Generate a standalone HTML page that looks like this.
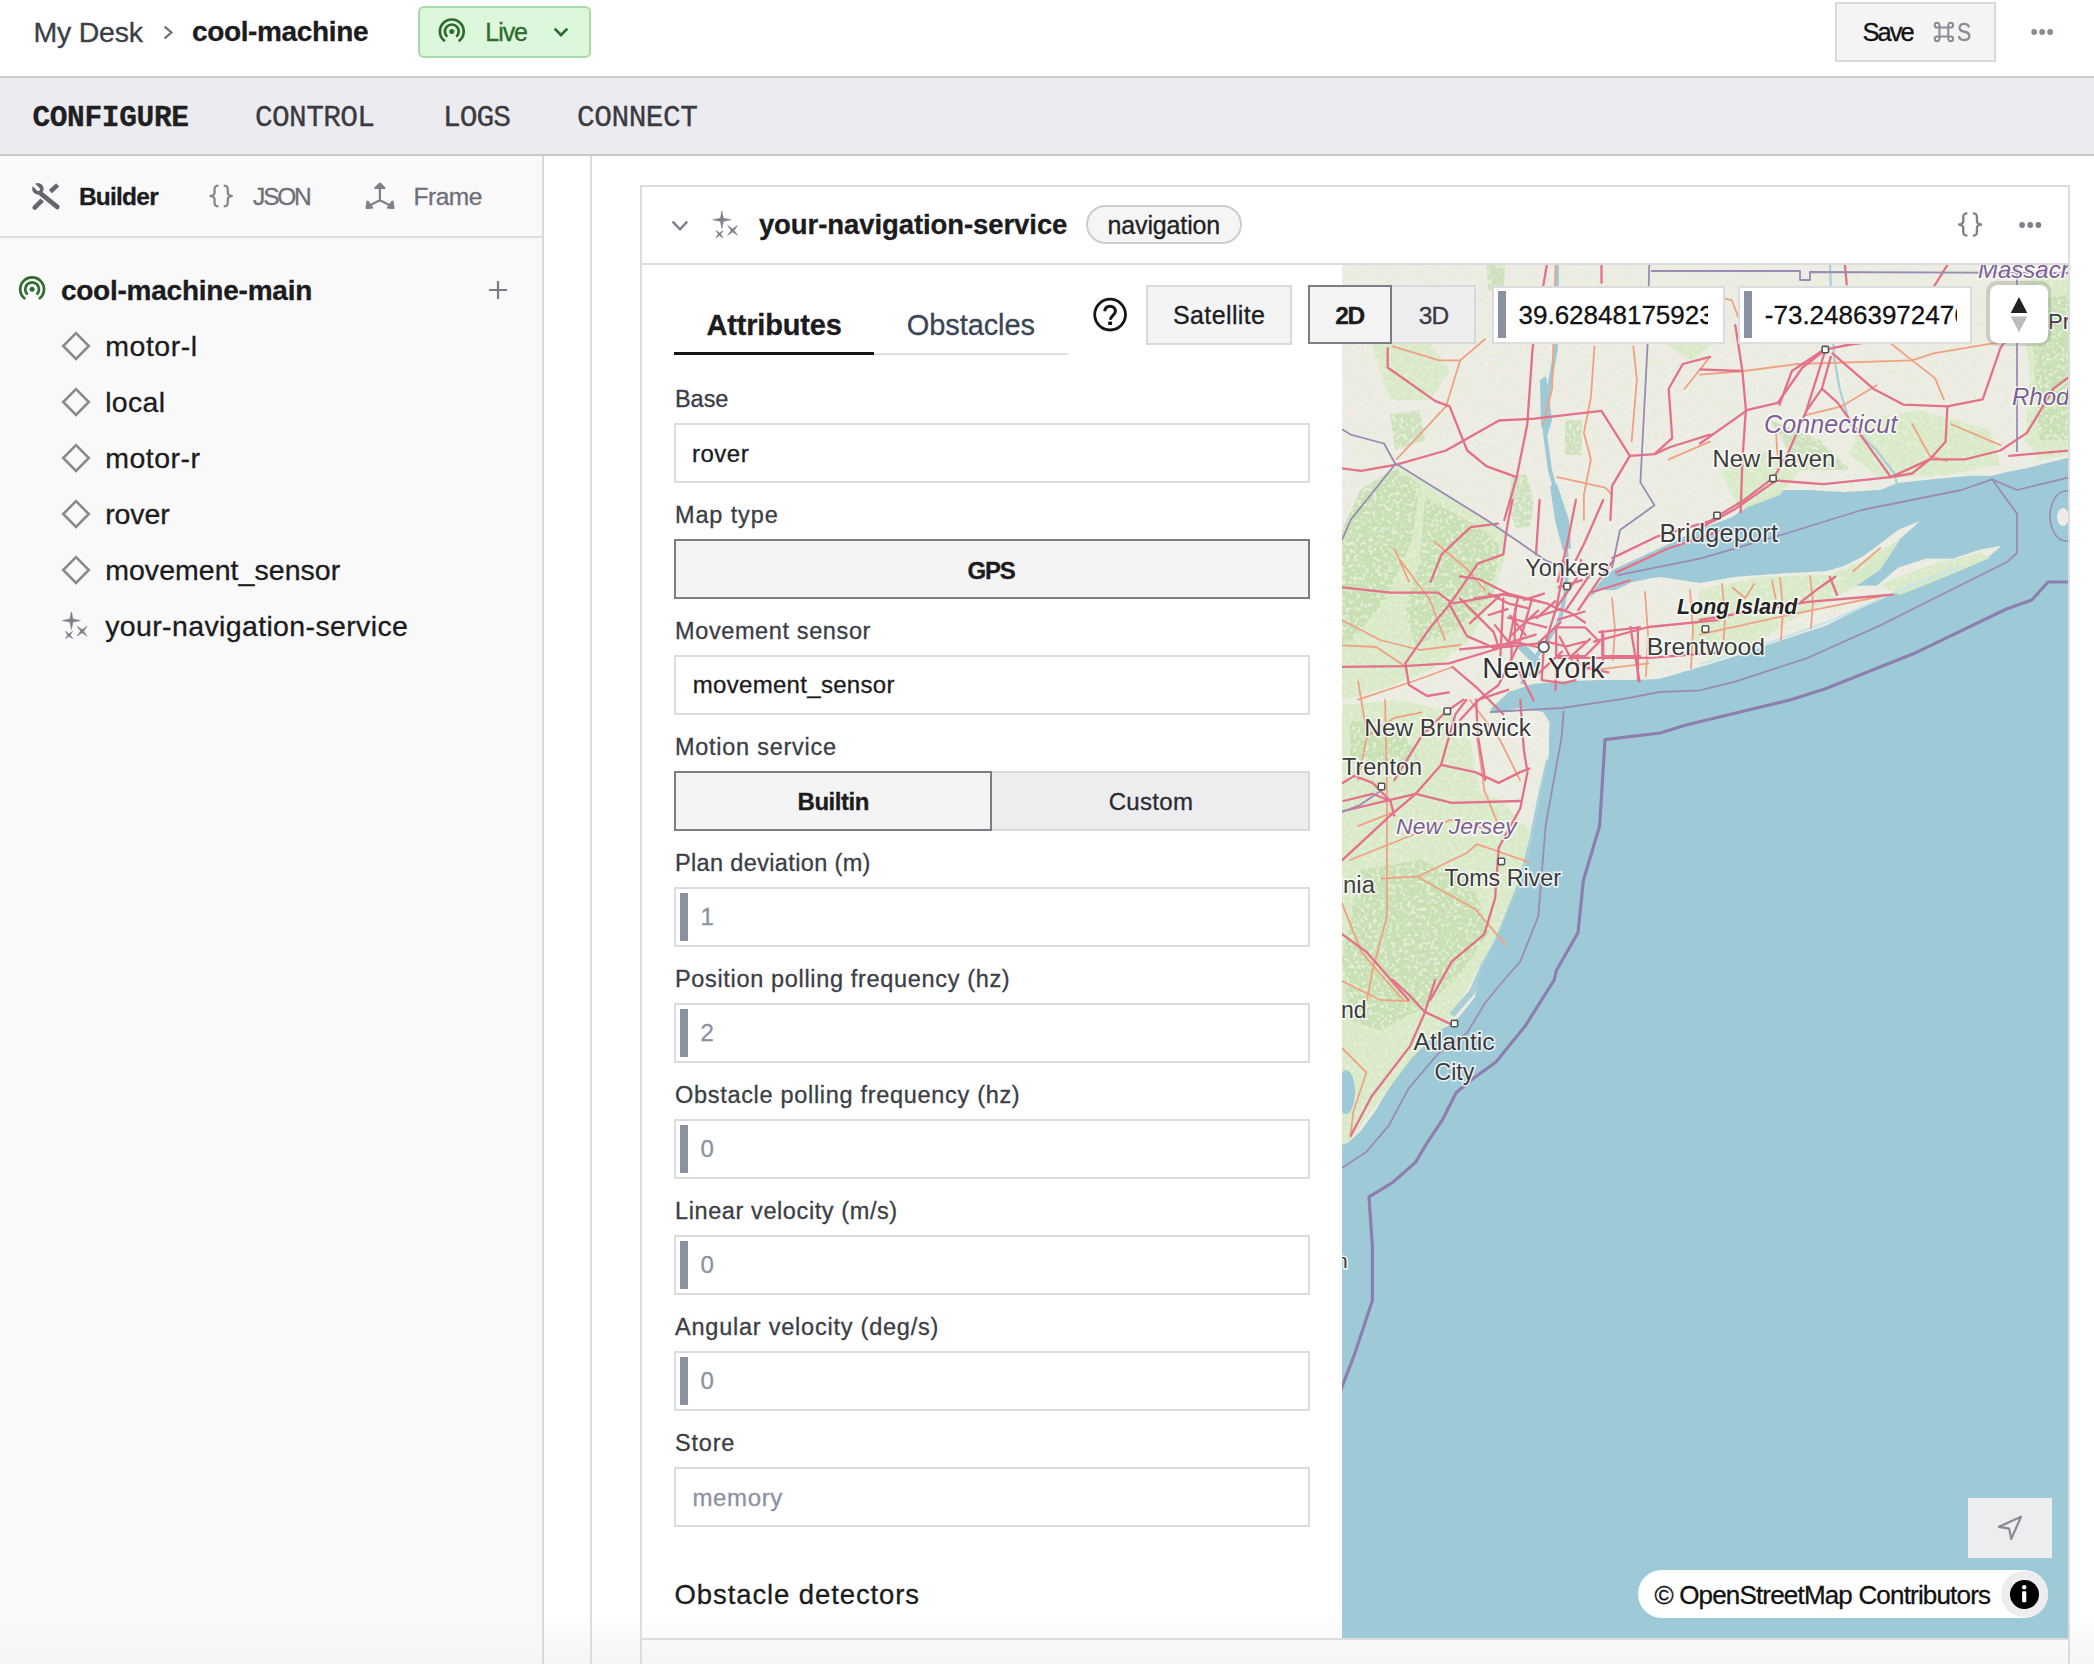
<!DOCTYPE html><html><head><meta charset="utf-8"><title>cool-machine</title><style>
html,body{margin:0;padding:0}
body{width:2094px;height:1664px;overflow:hidden;background:#fff;position:relative;font-family:"Liberation Sans",sans-serif}
.t{position:absolute;white-space:nowrap;line-height:1;-webkit-text-stroke:0.3px currentColor}
.a{position:absolute;box-sizing:border-box}
svg{position:absolute;left:0;top:0;overflow:visible}
</style></head><body>

<div class="a" style="left:0px;top:76px;width:2094px;height:2px;background:#cbcbcd"></div>
<div class="a" style="left:0px;top:78px;width:2094px;height:76px;background:#ecebf0"></div>
<div class="a" style="left:0px;top:154px;width:2094px;height:2px;background:#c9c9cb"></div>
<div class="a" style="left:0px;top:156px;width:542px;height:1508px;background:#f9f9fa"></div>
<div class="a" style="left:640px;top:185px;width:1430px;height:1479px;background:#fff"></div>
<div class="a" style="left:0px;top:1612px;width:2094px;height:52px;background:linear-gradient(rgba(248,248,249,0),rgba(245,245,246,0.95))"></div>
<div class="a" style="left:542px;top:156px;width:2px;height:1508px;background:#d9d9dd"></div>
<div class="a" style="left:0px;top:236px;width:542px;height:2px;background:#dedee2"></div>
<div class="a" style="left:590px;top:156px;width:2px;height:1508px;background:#dcdce0"></div>
<div class="a" style="left:640px;top:185px;width:1430px;height:1479px;border:2px solid #dcdce0;border-bottom:none"></div>
<div class="a" style="left:642px;top:263px;width:1426px;height:2px;background:#dcdce0"></div>
<div class="a" style="left:642px;top:1638px;width:1426px;height:2px;background:#dcdce0"></div>
<div class="a" style="left:1342px;top:265px;width:726px;height:1373px;overflow:hidden;background:#9ecad8">
<svg width="726" height="1373" viewBox="1342 265 726 1373" style="left:0;top:0">
<defs><filter id="blur1" x="-5%" y="-5%" width="110%" height="110%"><feGaussianBlur stdDeviation="0.6"/></filter></defs>
<polygon points="1330.0,255.0 2080.0,255.0 2080.0,457.0 2068.0,457.7 2024.6,468.5 2006.5,472.0 1992.0,475.7 1970.5,475.7 1934.0,479.0 1898.0,483.0 1880.0,490.0 1844.0,492.0 1808.0,490.0 1777.5,490.0 1754.0,503.0 1730.0,518.0 1700.0,529.0 1660.0,548.0 1631.7,561.0 1614.5,569.0 1605.0,576.0 1592.0,592.0 1584.0,610.0 1589.4,598.0 1598.6,590.0 1615.8,590.0 1631.7,582.3 1651.5,578.3 1660.0,577.0 1700.0,583.0 1736.0,576.7 1790.0,573.0 1826.0,571.3 1844.0,566.0 1862.0,557.0 1880.0,544.0 1898.0,530.0 1920.0,521.0 1898.0,540.6 1880.0,558.7 1853.0,573.0 1840.6,585.7 1876.7,585.7 1898.0,567.7 1925.4,558.7 1952.4,558.7 1979.5,549.7 2001.0,546.0 1988.5,557.0 1952.4,569.5 1916.4,584.0 1880.3,598.3 1826.0,625.4 1772.0,643.4 1736.0,656.0 1700.0,667.0 1660.0,678.8 1638.3,680.0 1598.6,680.0 1559.0,681.5 1532.5,684.0 1508.7,692.0 1490.2,709.2 1495.5,713.2 1519.3,708.0 1543.0,711.9 1549.7,722.4 1549.0,736.0 1549.0,754.0 1542.0,790.0 1534.7,826.0 1527.5,862.3 1513.0,894.7 1502.3,925.4 1495.0,943.4 1480.6,970.5 1474.8,997.2 1459.0,1017.0 1449.7,1025.0 1426.0,1036.8 1414.0,1054.0 1399.5,1072.5 1386.3,1092.4 1374.4,1112.2 1359.8,1132.0 1348.0,1142.6 1330.0,1148.0" fill="#efece6"/>
<ellipse cx="2063" cy="517" rx="6" ry="9" fill="#efece6"/>
<polygon points="1395.0,465.0 1440.0,492.0 1487.0,520.0 1508.0,534.0 1504.0,560.0 1492.0,600.0 1470.0,640.0 1430.0,670.0 1380.0,690.0 1342.0,700.0 1342.0,531.0 1357.0,504.0" fill="#d8e9c6" opacity="0.95"/>
<polygon points="1342.0,705.0 1400.0,700.0 1450.0,712.0 1470.0,740.0 1480.0,790.0 1500.0,800.0 1530.0,830.0 1522.0,880.0 1500.0,930.0 1475.0,975.0 1450.0,1020.0 1412.0,1058.0 1380.0,1100.0 1350.0,1140.0 1342.0,1145.0" fill="#d8e9c6" opacity="0.95"/>
<polygon points="1700.0,590.0 1760.0,577.0 1830.0,575.0 1860.0,562.0 1880.0,550.0 1900.0,540.0 1880.0,570.0 1850.0,590.0 1800.0,615.0 1760.0,640.0 1710.0,660.0 1690.0,650.0" fill="#d8e9c6" opacity="0.95"/>
<polygon points="1880.0,585.0 1930.0,565.0 1980.0,553.0 1990.0,558.0 1950.0,575.0 1900.0,595.0" fill="#d8e9c6" opacity="0.95"/>
<polygon points="2020.0,280.0 2068.0,275.0 2068.0,455.0 2040.0,460.0 2025.0,440.0 2030.0,380.0" fill="#d8e9c6" opacity="0.95"/>
<polygon points="1860.0,420.0 1920.0,410.0 1990.0,430.0 2000.0,465.0 1940.0,476.0 1880.0,478.0 1850.0,455.0" fill="#d8e9c6" opacity="0.95"/>
<polygon points="1660.0,290.0 1700.0,300.0 1720.0,340.0 1690.0,360.0 1660.0,340.0" fill="#d8e9c6" opacity="0.95"/>
<polygon points="1370.0,340.0 1420.0,330.0 1450.0,370.0 1430.0,400.0 1390.0,400.0" fill="#d8e9c6" opacity="0.95"/>
<polygon points="1720.0,470.0 1760.0,450.0 1800.0,470.0 1780.0,495.0 1740.0,510.0" fill="#d8e9c6" opacity="0.95"/>
<polygon points="1360.0,490.0 1394.0,468.0 1420.0,485.0 1412.0,540.0 1385.0,600.0 1352.0,640.0 1342.0,645.0 1342.0,531.0" fill="#c0dcab" opacity="0.7"/>
<polygon points="1425.0,497.0 1480.0,528.0 1500.0,545.0 1492.0,595.0 1455.0,630.0 1415.0,645.0 1405.0,610.0 1420.0,560.0" fill="#c0dcab" opacity="0.7"/>
<polygon points="1390.0,414.0 1420.0,410.0 1425.0,440.0 1395.0,450.0" fill="#c0dcab" opacity="0.7"/>
<polygon points="1512.0,476.0 1526.0,474.0 1534.0,500.0 1530.0,526.0 1516.0,528.0 1508.0,505.0" fill="#c0dcab" opacity="0.7"/>
<polygon points="1565.0,420.0 1582.0,420.0 1582.0,455.0 1565.0,455.0" fill="#c0dcab" opacity="0.7"/>
<polygon points="1487.0,265.0 1505.0,265.0 1504.0,290.0 1488.0,290.0" fill="#c0dcab" opacity="0.7"/>
<polygon points="1360.0,870.0 1420.0,860.0 1470.0,880.0 1490.0,930.0 1460.0,975.0 1420.0,1010.0 1380.0,1030.0 1350.0,1020.0 1342.0,960.0" fill="#c0dcab" opacity="0.7"/>
<polygon points="1350.0,720.0 1400.0,730.0 1420.0,760.0 1380.0,770.0 1350.0,760.0" fill="#c0dcab" opacity="0.7"/>
<polygon points="1770.0,420.0 1820.0,440.0 1850.0,470.0 1800.0,470.0" fill="#c0dcab" opacity="0.7"/>
<polygon points="2030.0,300.0 2068.0,295.0 2068.0,440.0 2040.0,440.0" fill="#c0dcab" opacity="0.7"/>
<defs><clipPath id="landclip"><polygon points="1330.0,255.0 2080.0,255.0 2080.0,457.0 2068.0,457.7 2024.6,468.5 2006.5,472.0 1992.0,475.7 1970.5,475.7 1934.0,479.0 1898.0,483.0 1880.0,490.0 1844.0,492.0 1808.0,490.0 1777.5,490.0 1754.0,503.0 1730.0,518.0 1700.0,529.0 1660.0,548.0 1631.7,561.0 1614.5,569.0 1605.0,576.0 1592.0,592.0 1584.0,610.0 1589.4,598.0 1598.6,590.0 1615.8,590.0 1631.7,582.3 1651.5,578.3 1660.0,577.0 1700.0,583.0 1736.0,576.7 1790.0,573.0 1826.0,571.3 1844.0,566.0 1862.0,557.0 1880.0,544.0 1898.0,530.0 1920.0,521.0 1898.0,540.6 1880.0,558.7 1853.0,573.0 1840.6,585.7 1876.7,585.7 1898.0,567.7 1925.4,558.7 1952.4,558.7 1979.5,549.7 2001.0,546.0 1988.5,557.0 1952.4,569.5 1916.4,584.0 1880.3,598.3 1826.0,625.4 1772.0,643.4 1736.0,656.0 1700.0,667.0 1660.0,678.8 1638.3,680.0 1598.6,680.0 1559.0,681.5 1532.5,684.0 1508.7,692.0 1490.2,709.2 1495.5,713.2 1519.3,708.0 1543.0,711.9 1549.7,722.4 1549.0,736.0 1549.0,754.0 1542.0,790.0 1534.7,826.0 1527.5,862.3 1513.0,894.7 1502.3,925.4 1495.0,943.4 1480.6,970.5 1474.8,997.2 1459.0,1017.0 1449.7,1025.0 1426.0,1036.8 1414.0,1054.0 1399.5,1072.5 1386.3,1092.4 1374.4,1112.2 1359.8,1132.0 1348.0,1142.6 1330.0,1148.0"/></clipPath><filter id="spk" x="1342" y="265" width="726" height="1373" filterUnits="userSpaceOnUse"><feTurbulence type="fractalNoise" baseFrequency="0.26" numOctaves="2" seed="7"/><feColorMatrix type="matrix" values="0 0 0 0 0.76  0 0 0 0 0.87  0 0 0 0 0.68  9 0 0 0 -4.75"/></filter></defs>
<g clip-path="url(#landclip)"><rect x="1342" y="265" width="726" height="1373" fill="#fff" filter="url(#spk)" opacity="0.9"/></g>
<ellipse cx="1346" cy="1092" rx="9" ry="22" fill="#9ecad8"/>
<polyline points="1557.0,265.0 1556.0,348.0 1547.0,400.0 1545.0,434.0 1550.0,470.0 1558.0,500.0 1565.0,540.0 1567.0,560.0 1566.0,590.0 1560.0,620.0 1548.0,640.0 1539.0,652.4 1530.0,666.0 1522.0,684.0" fill="none" stroke="#9ecad8" stroke-width="4"/>
<polygon points="1550.0,486.0 1557.0,484.0 1569.0,520.0 1571.0,548.0 1563.0,551.0 1555.0,520.0" fill="#9ecad8"/>
<polygon points="1540.0,380.0 1546.0,376.0 1552.0,420.0 1546.0,440.0 1541.0,425.0" fill="#9ecad8"/>
<polyline points="1830.0,265.0 1832.0,320.0 1834.0,357.0 1839.6,388.7 1850.0,424.0 1876.7,450.5 1894.4,473.5 1897.0,485.0" fill="none" stroke="#aacfdc" stroke-width="2.2"/>
<polyline points="1520.0,645.0 1535.0,660.0 1528.0,675.0" fill="none" stroke="#9ecad8" stroke-width="8"/>
<polyline points="1549.0,760.0 1540.0,800.0 1532.0,840.0 1522.0,880.0 1508.0,915.0 1498.0,940.0 1484.0,965.0 1472.0,992.0 1452.0,1015.0" fill="none" stroke="#9ecad8" stroke-width="6" opacity="0.85"/>
<polyline points="1700.0,664.0 1760.0,646.0 1830.0,621.0 1900.0,590.0 1960.0,566.0" fill="none" stroke="#c9e3ea" stroke-width="2"/>
<polyline points="1700.0,374.6 1744.2,371.0 1797.2,364.0 1912.1,360.4 1933.3,353.4 2018.1,339.2" fill="none" stroke="#efa183" stroke-width="1.8" stroke-linejoin="round" stroke-linecap="round"/>
<polyline points="1876.7,385.2 1841.4,406.4 1806.0,415.2" fill="none" stroke="#efa183" stroke-width="1.8" stroke-linejoin="round" stroke-linecap="round"/>
<polyline points="1912.1,360.4 1935.0,378.1 1943.9,399.3" fill="none" stroke="#efa183" stroke-width="1.8" stroke-linejoin="round" stroke-linecap="round"/>
<polyline points="1950.9,424.0 2000.4,445.2" fill="none" stroke="#efa183" stroke-width="1.8" stroke-linejoin="round" stroke-linecap="round"/>
<polyline points="1885.5,339.2 1912.1,360.4" fill="none" stroke="#efa183" stroke-width="1.8" stroke-linejoin="round" stroke-linecap="round"/>
<polyline points="1912.1,424.0 1929.7,455.8 1947.4,461.1" fill="none" stroke="#efa183" stroke-width="1.8" stroke-linejoin="round" stroke-linecap="round"/>
<polyline points="1776.0,432.9 1777.8,459.4" fill="none" stroke="#efa183" stroke-width="1.8" stroke-linejoin="round" stroke-linecap="round"/>
<polyline points="1700.0,291.5 1731.8,300.3 1740.6,323.3" fill="none" stroke="#efa183" stroke-width="1.8" stroke-linejoin="round" stroke-linecap="round"/>
<polyline points="1393.0,346.3 1439.0,360.4 1460.2,360.4 1484.9,339.2" fill="none" stroke="#efa183" stroke-width="1.8" stroke-linejoin="round" stroke-linecap="round"/>
<polyline points="1460.2,360.4 1446.0,406.4 1396.5,459.4" fill="none" stroke="#efa183" stroke-width="1.8" stroke-linejoin="round" stroke-linecap="round"/>
<polyline points="1555.6,265.0 1552.1,388.7 1543.2,424.0" fill="none" stroke="#efa183" stroke-width="1.8" stroke-linejoin="round" stroke-linecap="round"/>
<polyline points="1594.5,346.3 1590.9,397.5 1583.9,432.9 1590.9,459.4 1583.9,494.7 1583.9,520.0" fill="none" stroke="#efa183" stroke-width="1.8" stroke-linejoin="round" stroke-linecap="round"/>
<polyline points="1633.3,346.3 1636.9,379.9 1631.6,441.7" fill="none" stroke="#efa183" stroke-width="1.8" stroke-linejoin="round" stroke-linecap="round"/>
<polyline points="1557.4,477.1 1605.1,487.7 1612.1,494.7" fill="none" stroke="#efa183" stroke-width="1.8" stroke-linejoin="round" stroke-linecap="round"/>
<polyline points="1668.7,459.4 1710.0,441.7" fill="none" stroke="#efa183" stroke-width="1.8" stroke-linejoin="round" stroke-linecap="round"/>
<polyline points="1684.6,388.7 1710.0,356.9" fill="none" stroke="#efa183" stroke-width="1.8" stroke-linejoin="round" stroke-linecap="round"/>
<polyline points="1394.4,549.0 1409.0,581.7" fill="none" stroke="#efa183" stroke-width="1.8" stroke-linejoin="round" stroke-linecap="round"/>
<polyline points="1434.4,541.7 1467.0,569.0 1485.2,590.7" fill="none" stroke="#efa183" stroke-width="1.8" stroke-linejoin="round" stroke-linecap="round"/>
<polyline points="1340.0,645.2 1376.3,647.0 1403.5,665.2" fill="none" stroke="#efa183" stroke-width="1.8" stroke-linejoin="round" stroke-linecap="round"/>
<polyline points="1358.1,699.6 1412.6,681.5 1452.5,667.0" fill="none" stroke="#efa183" stroke-width="1.8" stroke-linejoin="round" stroke-linecap="round"/>
<polyline points="1367.2,735.9 1394.4,717.8 1421.7,712.3" fill="none" stroke="#efa183" stroke-width="1.8" stroke-linejoin="round" stroke-linecap="round"/>
<polyline points="1358.1,681.5 1367.2,735.9 1358.1,780.0" fill="none" stroke="#efa183" stroke-width="1.8" stroke-linejoin="round" stroke-linecap="round"/>
<polyline points="1575.9,663.3 1603.2,668.8 1648.5,663.3" fill="none" stroke="#efa183" stroke-width="1.8" stroke-linejoin="round" stroke-linecap="round"/>
<polyline points="1381.5,878.5 1417.5,876.7 1466.2,853.3 1477.0,844.2 1529.3,862.3" fill="none" stroke="#efa183" stroke-width="1.8" stroke-linejoin="round" stroke-linecap="round"/>
<polyline points="1417.5,876.7 1475.2,909.2 1505.9,945.2" fill="none" stroke="#efa183" stroke-width="1.8" stroke-linejoin="round" stroke-linecap="round"/>
<polyline points="1385.1,700.0 1386.9,790.2 1386.9,916.4 1372.5,970.5 1367.0,1000.0" fill="none" stroke="#efa183" stroke-width="1.8" stroke-linejoin="round" stroke-linecap="round"/>
<polyline points="1340.0,898.3 1361.6,952.4 1403.1,1000.0" fill="none" stroke="#efa183" stroke-width="1.8" stroke-linejoin="round" stroke-linecap="round"/>
<polyline points="1477.0,736.1 1484.2,790.2 1498.7,826.2" fill="none" stroke="#efa183" stroke-width="1.8" stroke-linejoin="round" stroke-linecap="round"/>
<polyline points="1358.0,826.2 1394.1,811.8" fill="none" stroke="#efa183" stroke-width="1.8" stroke-linejoin="round" stroke-linecap="round"/>
<polyline points="1340.0,980.0 1379.7,999.8 1408.7,1001.2" fill="none" stroke="#efa183" stroke-width="1.8" stroke-linejoin="round" stroke-linecap="round"/>
<polyline points="1340.0,1046.1 1366.4,1072.5 1353.2,1112.2 1350.6,1136.0" fill="none" stroke="#efa183" stroke-width="1.8" stroke-linejoin="round" stroke-linecap="round"/>
<polyline points="1700.0,634.4 1790.2,614.6 1880.3,596.5" fill="none" stroke="#efa183" stroke-width="1.8" stroke-linejoin="round" stroke-linecap="round"/>
<polyline points="1853.3,571.3 1880.3,547.9" fill="none" stroke="#efa183" stroke-width="1.8" stroke-linejoin="round" stroke-linecap="round"/>
<polyline points="1732.5,587.5 1745.1,598.3 1754.1,583.9" fill="none" stroke="#efa183" stroke-width="1.8" stroke-linejoin="round" stroke-linecap="round"/>
<polyline points="1772.1,580.3 1775.7,598.3" fill="none" stroke="#efa183" stroke-width="1.8" stroke-linejoin="round" stroke-linecap="round"/>
<polyline points="1612.0,598.0 1615.0,629.0 1613.0,660.0" fill="none" stroke="#efa183" stroke-width="1.8" stroke-linejoin="round" stroke-linecap="round"/>
<polyline points="1645.0,592.0 1648.0,634.0 1646.0,676.0" fill="none" stroke="#efa183" stroke-width="1.8" stroke-linejoin="round" stroke-linecap="round"/>
<polyline points="1690.0,590.0 1693.0,629.0 1691.0,668.0" fill="none" stroke="#efa183" stroke-width="1.8" stroke-linejoin="round" stroke-linecap="round"/>
<polyline points="1722.0,584.0 1725.0,617.0 1723.0,650.0" fill="none" stroke="#efa183" stroke-width="1.8" stroke-linejoin="round" stroke-linecap="round"/>
<polyline points="1780.0,578.0 1783.0,609.0 1781.0,640.0" fill="none" stroke="#efa183" stroke-width="1.8" stroke-linejoin="round" stroke-linecap="round"/>
<polyline points="1810.0,576.0 1813.0,602.0 1811.0,628.0" fill="none" stroke="#efa183" stroke-width="1.8" stroke-linejoin="round" stroke-linecap="round"/>
<polyline points="1342.0,620.0 1380.0,640.0 1420.0,650.0 1460.0,645.0" fill="none" stroke="#efa183" stroke-width="1.8" stroke-linejoin="round" stroke-linecap="round"/>
<polyline points="1400.0,560.0 1430.0,600.0 1445.0,640.0" fill="none" stroke="#efa183" stroke-width="1.8" stroke-linejoin="round" stroke-linecap="round"/>
<polyline points="1470.0,700.0 1500.0,740.0 1520.0,780.0" fill="none" stroke="#efa183" stroke-width="1.8" stroke-linejoin="round" stroke-linecap="round"/>
<polyline points="1350.0,860.0 1400.0,840.0 1450.0,820.0 1490.0,830.0" fill="none" stroke="#efa183" stroke-width="1.8" stroke-linejoin="round" stroke-linecap="round"/>
<polyline points="1340.0,468.2 1361.2,470.9 1396.5,464.7 1446.0,450.5 1499.0,420.5 1534.4,418.7 1601.5,410.8 1629.8,455.8 1654.5,454.1 1670.4,447.0 1710.0,434.6" fill="none" stroke="#e27189" stroke-width="2.3" stroke-linejoin="round" stroke-linecap="round"/>
<polyline points="1387.7,348.1 1387.7,367.5 1435.4,401.1 1449.6,406.4 1467.2,450.5 1486.7,466.4 1516.7,477.1 1504.3,520.0" fill="none" stroke="#e27189" stroke-width="2.3" stroke-linejoin="round" stroke-linecap="round"/>
<polyline points="1546.8,265.0 1532.6,348.1 1527.3,424.0 1516.7,477.1" fill="none" stroke="#e27189" stroke-width="2.3" stroke-linejoin="round" stroke-linecap="round"/>
<polyline points="1601.5,265.0 1601.5,282.7" fill="none" stroke="#e27189" stroke-width="2.3" stroke-linejoin="round" stroke-linecap="round"/>
<polyline points="1629.8,455.8 1612.1,485.9 1610.4,520.0" fill="none" stroke="#e27189" stroke-width="2.3" stroke-linejoin="round" stroke-linecap="round"/>
<polyline points="1654.5,454.1 1672.2,438.2 1668.7,388.7 1682.8,364.0 1710.0,356.9" fill="none" stroke="#e27189" stroke-width="2.3" stroke-linejoin="round" stroke-linecap="round"/>
<polyline points="1825.5,349.8 1806.0,411.7 1788.4,452.3 1774.2,477.1 1744.2,500.0 1717.7,515.9 1700.0,528.3" fill="none" stroke="#e27189" stroke-width="2.3" stroke-linejoin="round" stroke-linecap="round"/>
<polyline points="1830.8,356.9 1821.9,388.7 1806.0,411.7" fill="none" stroke="#e27189" stroke-width="2.3" stroke-linejoin="round" stroke-linecap="round"/>
<polyline points="1825.5,349.8 1802.5,367.5 1777.8,402.8 1747.7,409.9 1700.0,443.5" fill="none" stroke="#e27189" stroke-width="2.3" stroke-linejoin="round" stroke-linecap="round"/>
<polyline points="1832.5,353.4 1873.2,388.7 1903.2,404.6 1947.4,406.4 1982.7,399.3 2000.4,348.1 2003.9,342.8 2070.0,318.0" fill="none" stroke="#e27189" stroke-width="2.3" stroke-linejoin="round" stroke-linecap="round"/>
<polyline points="1947.4,406.4 1945.6,441.7 1929.7,459.4 1912.1,473.5 1890.8,477.1 1859.0,432.9 1837.8,402.8 1821.9,388.7" fill="none" stroke="#e27189" stroke-width="2.3" stroke-linejoin="round" stroke-linecap="round"/>
<polyline points="1700.0,528.3 1735.3,508.9 1776.0,480.6 1823.7,484.1 1890.8,477.1 1929.7,459.4 1965.1,459.4 2000.4,450.5 2026.9,432.9 2053.4,388.7 2070.0,376.3" fill="none" stroke="#e27189" stroke-width="2.3" stroke-linejoin="round" stroke-linecap="round"/>
<polyline points="1735.3,325.1 1742.4,371.0 1745.9,409.9 1742.4,459.4 1740.6,512.4" fill="none" stroke="#e27189" stroke-width="2.3" stroke-linejoin="round" stroke-linecap="round"/>
<polyline points="1700.0,369.3 1740.6,371.0" fill="none" stroke="#e27189" stroke-width="2.3" stroke-linejoin="round" stroke-linecap="round"/>
<polyline points="1779.5,404.6 1791.9,371.0 1823.7,349.8" fill="none" stroke="#e27189" stroke-width="2.3" stroke-linejoin="round" stroke-linecap="round"/>
<polyline points="1947.4,265.0 1929.7,293.3" fill="none" stroke="#e27189" stroke-width="2.3" stroke-linejoin="round" stroke-linecap="round"/>
<polyline points="1844.9,265.0 1846.7,284.4" fill="none" stroke="#e27189" stroke-width="2.3" stroke-linejoin="round" stroke-linecap="round"/>
<polyline points="2070.0,450.5 2009.2,455.8" fill="none" stroke="#e27189" stroke-width="2.3" stroke-linejoin="round" stroke-linecap="round"/>
<polyline points="1823.7,349.8 1850.2,344.5 1876.7,341.0" fill="none" stroke="#e27189" stroke-width="2.3" stroke-linejoin="round" stroke-linecap="round"/>
<polyline points="1340.0,587.1 1390.8,592.6 1438.0,592.6 1452.5,603.4 1503.3,594.4 1539.6,601.6" fill="none" stroke="#e27189" stroke-width="2.3" stroke-linejoin="round" stroke-linecap="round"/>
<polyline points="1340.0,667.0 1403.5,666.1 1448.9,663.3 1503.3,647.0 1539.6,643.4" fill="none" stroke="#e27189" stroke-width="2.3" stroke-linejoin="round" stroke-linecap="round"/>
<polyline points="1405.3,663.3 1430.7,627.0 1448.9,605.3 1477.9,563.5 1503.3,554.4 1507.0,527.2 1512.4,500.0" fill="none" stroke="#e27189" stroke-width="2.3" stroke-linejoin="round" stroke-linecap="round"/>
<polyline points="1405.3,663.3 1409.0,685.1 1427.1,696.0 1448.9,692.4" fill="none" stroke="#e27189" stroke-width="2.3" stroke-linejoin="round" stroke-linecap="round"/>
<polyline points="1448.9,603.4 1467.0,636.1 1496.1,648.8" fill="none" stroke="#e27189" stroke-width="2.3" stroke-linejoin="round" stroke-linecap="round"/>
<polyline points="1452.5,667.0 1477.9,688.7 1503.3,714.2" fill="none" stroke="#e27189" stroke-width="2.3" stroke-linejoin="round" stroke-linecap="round"/>
<polyline points="1463.4,699.6 1445.3,712.3 1421.7,735.9 1394.4,780.0" fill="none" stroke="#e27189" stroke-width="2.3" stroke-linejoin="round" stroke-linecap="round"/>
<polyline points="1476.1,699.6 1477.9,735.9 1485.2,780.0" fill="none" stroke="#e27189" stroke-width="2.3" stroke-linejoin="round" stroke-linecap="round"/>
<polyline points="1594.1,641.6 1648.5,627.0 1720.0,619.8" fill="none" stroke="#e27189" stroke-width="2.3" stroke-linejoin="round" stroke-linecap="round"/>
<polyline points="1557.8,657.9 1648.5,657.9 1720.0,652.5" fill="none" stroke="#e27189" stroke-width="2.3" stroke-linejoin="round" stroke-linecap="round"/>
<polyline points="1603.2,634.3 1603.2,663.3" fill="none" stroke="#e27189" stroke-width="2.3" stroke-linejoin="round" stroke-linecap="round"/>
<polyline points="1630.4,627.0 1639.5,681.5" fill="none" stroke="#e27189" stroke-width="2.3" stroke-linejoin="round" stroke-linecap="round"/>
<polyline points="1615.9,572.6 1666.7,549.0 1720.0,530.9" fill="none" stroke="#e27189" stroke-width="2.3" stroke-linejoin="round" stroke-linecap="round"/>
<polyline points="1612.2,558.1 1657.6,536.3 1720.0,518.1" fill="none" stroke="#e27189" stroke-width="2.3" stroke-linejoin="round" stroke-linecap="round"/>
<polyline points="1575.9,559.9 1585.0,541.7 1603.2,500.0" fill="none" stroke="#e27189" stroke-width="2.3" stroke-linejoin="round" stroke-linecap="round"/>
<polyline points="1557.8,581.7 1566.9,545.4 1575.9,500.0" fill="none" stroke="#e27189" stroke-width="2.3" stroke-linejoin="round" stroke-linecap="round"/>
<polyline points="1536.0,554.4 1539.6,500.0" fill="none" stroke="#e27189" stroke-width="2.3" stroke-linejoin="round" stroke-linecap="round"/>
<polyline points="1430.7,581.7 1441.6,554.4 1470.7,527.2 1497.9,523.6" fill="none" stroke="#e27189" stroke-width="2.3" stroke-linejoin="round" stroke-linecap="round"/>
<polyline points="1543.7,648.5 1556.2,608.1 1561.9,579.2 1565.8,560.0" fill="none" stroke="#e27189" stroke-width="2.3" stroke-linejoin="round" stroke-linecap="round"/>
<polyline points="1556.2,608.1 1576.3,579.2 1581.2,560.0" fill="none" stroke="#e27189" stroke-width="2.3" stroke-linejoin="round" stroke-linecap="round"/>
<polyline points="1565.8,610.0 1586.9,579.2 1594.6,565.8" fill="none" stroke="#e27189" stroke-width="2.3" stroke-linejoin="round" stroke-linecap="round"/>
<polyline points="1578.3,610.0 1599.4,579.2 1613.8,560.0" fill="none" stroke="#e27189" stroke-width="2.3" stroke-linejoin="round" stroke-linecap="round"/>
<polyline points="1460.0,649.4 1488.8,646.5 1517.7,642.7 1543.7,648.5" fill="none" stroke="#e27189" stroke-width="2.3" stroke-linejoin="round" stroke-linecap="round"/>
<polyline points="1556.2,627.3 1585.0,627.3 1599.4,641.7 1585.0,656.2 1556.2,656.2 1556.2,627.3" fill="none" stroke="#e27189" stroke-width="2.3" stroke-linejoin="round" stroke-linecap="round"/>
<polyline points="1599.4,632.1 1640.0,627.3" fill="none" stroke="#e27189" stroke-width="2.3" stroke-linejoin="round" stroke-linecap="round"/>
<polyline points="1602.3,631.2 1602.3,656.2 1640.0,656.2" fill="none" stroke="#e27189" stroke-width="2.3" stroke-linejoin="round" stroke-linecap="round"/>
<polyline points="1637.9,627.3 1637.9,680.2" fill="none" stroke="#e27189" stroke-width="2.3" stroke-linejoin="round" stroke-linecap="round"/>
<polyline points="1460.0,576.3 1479.2,579.2 1508.1,593.7 1546.5,603.3 1556.2,608.1" fill="none" stroke="#e27189" stroke-width="2.3" stroke-linejoin="round" stroke-linecap="round"/>
<polyline points="1460.0,598.5 1474.4,612.9 1493.7,632.1 1498.5,646.5" fill="none" stroke="#e27189" stroke-width="2.3" stroke-linejoin="round" stroke-linecap="round"/>
<polyline points="1474.4,598.5 1508.1,593.7" fill="none" stroke="#e27189" stroke-width="2.3" stroke-linejoin="round" stroke-linecap="round"/>
<polyline points="1503.3,598.5 1500.4,656.2" fill="none" stroke="#e27189" stroke-width="2.3" stroke-linejoin="round" stroke-linecap="round"/>
<polyline points="1517.7,598.5 1508.1,646.5" fill="none" stroke="#e27189" stroke-width="2.3" stroke-linejoin="round" stroke-linecap="round"/>
<polyline points="1532.1,598.5 1519.6,641.7" fill="none" stroke="#e27189" stroke-width="2.3" stroke-linejoin="round" stroke-linecap="round"/>
<polyline points="1517.7,646.5 1498.5,685.0 1479.2,699.4 1460.0,720.0" fill="none" stroke="#e27189" stroke-width="2.3" stroke-linejoin="round" stroke-linecap="round"/>
<polyline points="1479.2,699.4 1508.1,689.8" fill="none" stroke="#e27189" stroke-width="2.3" stroke-linejoin="round" stroke-linecap="round"/>
<polyline points="1543.7,648.5 1541.7,680.2 1563.8,683.1 1575.4,680.2" fill="none" stroke="#e27189" stroke-width="2.3" stroke-linejoin="round" stroke-linecap="round"/>
<polyline points="1546.5,641.7 1565.8,646.5 1585.0,641.7" fill="none" stroke="#e27189" stroke-width="2.3" stroke-linejoin="round" stroke-linecap="round"/>
<polyline points="1556.2,608.1 1570.6,612.9 1585.0,622.5" fill="none" stroke="#e27189" stroke-width="2.3" stroke-linejoin="round" stroke-linecap="round"/>
<polyline points="1508.1,617.7 1527.3,622.5 1546.5,627.3" fill="none" stroke="#e27189" stroke-width="2.3" stroke-linejoin="round" stroke-linecap="round"/>
<polyline points="1488.8,593.7 1508.1,603.3 1527.3,608.1" fill="none" stroke="#e27189" stroke-width="2.3" stroke-linejoin="round" stroke-linecap="round"/>
<polyline points="1340.0,862.3 1390.5,815.4 1415.7,793.8 1441.0,764.9 1455.4,714.4 1466.2,700.0" fill="none" stroke="#e27189" stroke-width="2.3" stroke-linejoin="round" stroke-linecap="round"/>
<polyline points="1520.3,700.0 1523.9,750.5 1527.5,772.1 1520.3,808.2 1498.7,847.9 1495.1,898.3 1484.2,934.4 1451.8,961.4 1430.2,1000.0" fill="none" stroke="#e27189" stroke-width="2.3" stroke-linejoin="round" stroke-linecap="round"/>
<polyline points="1340.0,811.8 1415.7,793.8 1451.8,802.8 1520.3,801.0" fill="none" stroke="#e27189" stroke-width="2.3" stroke-linejoin="round" stroke-linecap="round"/>
<polyline points="1340.0,932.6 1367.0,952.4 1408.5,1000.0" fill="none" stroke="#e27189" stroke-width="2.3" stroke-linejoin="round" stroke-linecap="round"/>
<polyline points="1441.0,764.9 1475.2,772.1 1498.7,782.9 1520.3,772.1 1529.3,768.5" fill="none" stroke="#e27189" stroke-width="2.3" stroke-linejoin="round" stroke-linecap="round"/>
<polyline points="1340.0,784.7 1354.4,775.7 1372.5,782.9 1390.5,801.0 1394.1,815.4" fill="none" stroke="#e27189" stroke-width="2.3" stroke-linejoin="round" stroke-linecap="round"/>
<polyline points="1343.6,801.0 1372.5,793.8 1390.5,801.0" fill="none" stroke="#e27189" stroke-width="2.3" stroke-linejoin="round" stroke-linecap="round"/>
<polyline points="1435.2,980.0 1424.6,1013.1 1410.1,1046.1 1371.7,1096.3 1350.6,1136.0" fill="none" stroke="#e27189" stroke-width="2.3" stroke-linejoin="round" stroke-linecap="round"/>
<polyline points="1392.9,980.0 1408.7,994.5 1424.6,1011.7 1452.4,1024.9" fill="none" stroke="#e27189" stroke-width="2.3" stroke-linejoin="round" stroke-linecap="round"/>
<polyline points="1700.0,620.0 1808.2,601.9 1871.3,596.5 1892.9,594.7" fill="none" stroke="#e27189" stroke-width="2.3" stroke-linejoin="round" stroke-linecap="round"/>
<polyline points="1801.0,601.9 1817.2,589.3 1835.2,576.7" fill="none" stroke="#e27189" stroke-width="2.3" stroke-linejoin="round" stroke-linecap="round"/>
<polyline points="1829.8,576.7 1837.0,594.7" fill="none" stroke="#e27189" stroke-width="2.3" stroke-linejoin="round" stroke-linecap="round"/>
<polyline points="1558.5,587.4 1582.0,580.1" fill="none" stroke="#e27189" stroke-width="2.3" stroke-linejoin="round" stroke-linecap="round"/>
<polyline points="1501.0,594.7 1470.0,623.2" fill="none" stroke="#e27189" stroke-width="2.3" stroke-linejoin="round" stroke-linecap="round"/>
<polyline points="1495.0,625.1 1507.8,641.2" fill="none" stroke="#e27189" stroke-width="2.3" stroke-linejoin="round" stroke-linecap="round"/>
<polyline points="1511.8,642.2 1511.1,665.6" fill="none" stroke="#e27189" stroke-width="2.3" stroke-linejoin="round" stroke-linecap="round"/>
<polyline points="1559.7,636.8 1573.4,663.6" fill="none" stroke="#e27189" stroke-width="2.3" stroke-linejoin="round" stroke-linecap="round"/>
<polyline points="1517.0,667.6 1533.7,700.4" fill="none" stroke="#e27189" stroke-width="2.3" stroke-linejoin="round" stroke-linecap="round"/>
<polyline points="1524.1,599.8 1544.0,593.6" fill="none" stroke="#e27189" stroke-width="2.3" stroke-linejoin="round" stroke-linecap="round"/>
<polyline points="1528.7,619.1 1561.5,609.0" fill="none" stroke="#e27189" stroke-width="2.3" stroke-linejoin="round" stroke-linecap="round"/>
<polyline points="1577.8,654.3 1577.2,675.7" fill="none" stroke="#e27189" stroke-width="2.3" stroke-linejoin="round" stroke-linecap="round"/>
<polyline points="1591.1,592.5 1629.7,580.5" fill="none" stroke="#e27189" stroke-width="2.3" stroke-linejoin="round" stroke-linecap="round"/>
<polyline points="1556.1,666.9 1555.5,690.0" fill="none" stroke="#e27189" stroke-width="2.3" stroke-linejoin="round" stroke-linecap="round"/>
<polyline points="1493.0,647.8 1535.6,634.6" fill="none" stroke="#e27189" stroke-width="2.3" stroke-linejoin="round" stroke-linecap="round"/>
<polyline points="1583.4,667.3 1608.4,672.4" fill="none" stroke="#e27189" stroke-width="2.3" stroke-linejoin="round" stroke-linecap="round"/>
<polyline points="1558.1,619.7 1584.5,611.5" fill="none" stroke="#e27189" stroke-width="2.3" stroke-linejoin="round" stroke-linecap="round"/>
<polyline points="1562.1,651.7 1535.9,675.6" fill="none" stroke="#e27189" stroke-width="2.3" stroke-linejoin="round" stroke-linecap="round"/>
<polyline points="1555.1,601.3 1536.9,617.9" fill="none" stroke="#e27189" stroke-width="2.3" stroke-linejoin="round" stroke-linecap="round"/>
<polyline points="1538.2,610.6 1511.2,635.4" fill="none" stroke="#e27189" stroke-width="2.3" stroke-linejoin="round" stroke-linecap="round"/>
<polyline points="1510.3,615.8 1525.3,634.8" fill="none" stroke="#e27189" stroke-width="2.3" stroke-linejoin="round" stroke-linecap="round"/>
<polyline points="1488.7,615.0 1507.6,609.1" fill="none" stroke="#e27189" stroke-width="2.3" stroke-linejoin="round" stroke-linecap="round"/>
<polyline points="1590.0,638.9 1570.5,656.8" fill="none" stroke="#e27189" stroke-width="2.3" stroke-linejoin="round" stroke-linecap="round"/>
<polyline points="1560.4,622.6 1538.0,643.1" fill="none" stroke="#e27189" stroke-width="2.3" stroke-linejoin="round" stroke-linecap="round"/>
<polyline points="1515.5,608.4 1514.5,641.0" fill="none" stroke="#e27189" stroke-width="2.3" stroke-linejoin="round" stroke-linecap="round"/>
<polyline points="1342.0,429.3 1350.6,434.6 1384.0,443.5 1394.8,463.0 1486.7,520.0 1545.0,560.0 1590.0,578.0" fill="none" stroke="#9a8bb4" stroke-width="1.8" stroke-linejoin="round"/>
<polyline points="1394.8,464.7 1350.6,520.0 1342.0,540.0" fill="none" stroke="#9a8bb4" stroke-width="1.8" stroke-linejoin="round"/>
<polyline points="1382.0,790.0 1360.0,805.0 1342.0,812.0" fill="none" stroke="#9a8bb4" stroke-width="1.8" stroke-linejoin="round"/>
<polyline points="1649.2,265.0 1647.5,346.3 1640.4,482.4 1654.5,505.3 1620.0,530.0 1612.0,568.0" fill="none" stroke="#9a8bb4" stroke-width="1.8" stroke-linejoin="round"/>
<polyline points="1651.0,271.0 1800.0,271.0 1800.0,280.0 1810.0,280.0 1810.0,272.0 2068.0,273.0" fill="none" stroke="#9a8bb4" stroke-width="1.8" stroke-linejoin="round"/>
<polyline points="2017.0,265.0 2017.0,452.0" fill="none" stroke="#9a8bb4" stroke-width="1.8" stroke-linejoin="round"/>
<polyline points="1617.0,575.4 1700.0,558.7 1781.0,535.0 1862.0,510.0 1961.5,490.0 1992.0,479.3 2017.0,513.6 2017.0,553.0 2006.5,562.3 1952.4,589.3 1880.3,625.4 1808.0,657.8 1736.0,681.3 1700.0,690.3 1660.0,692.0 1625.0,698.6 1561.6,708.0 1490.0,712.0" fill="none" stroke="#9a8bb4" stroke-width="1.8" stroke-linejoin="round"/>
<polyline points="1992.0,479.3 2017.0,490.0 2068.0,477.5" fill="none" stroke="#9a8bb4" stroke-width="1.8" stroke-linejoin="round"/>
<polyline points="1563.6,710.8 1561.8,736.0 1545.6,826.0 1538.3,916.4 1520.3,961.5 1504.0,980.0 1485.4,1002.5 1467.0,1032.9 1437.8,1054.0 1408.7,1088.4 1388.9,1125.4 1366.4,1151.9 1342.0,1167.7" fill="none" stroke="#9a8bb4" stroke-width="1.8" stroke-linejoin="round"/>
<ellipse cx="2066" cy="516" rx="16" ry="25" fill="none" stroke="#9a8bb4" stroke-width="1.6"/>
<polyline points="2070.0,582.0 2048.0,582.0 2031.8,600.0 2006.5,609.0 1916.4,652.4 1826.0,688.5 1790.0,700.0 1686.0,725.0 1660.0,733.0 1605.0,739.7 1599.6,826.0 1583.4,880.3 1578.0,932.6 1556.4,970.5 1554.2,980.0 1525.0,1026.3 1496.0,1062.0 1472.2,1079.2 1456.3,1092.4 1443.0,1118.8 1427.3,1142.6 1415.4,1162.4 1392.9,1182.3 1369.0,1196.8 1372.4,1246.5 1372.4,1300.6 1354.4,1354.7 1340.0,1392.0" fill="none" stroke="#8c7fb0" stroke-width="3.2" stroke-linejoin="round"/>
<rect x="1563.8" y="583.0999999999999" width="6.4" height="6.4" rx="1" fill="#fff" stroke="#555" stroke-width="1.6"/>
<rect x="1769.8" y="475.2" width="6.4" height="6.4" rx="1" fill="#fff" stroke="#555" stroke-width="1.6"/>
<rect x="1713.8" y="512.1999999999999" width="6.4" height="6.4" rx="1" fill="#fff" stroke="#555" stroke-width="1.6"/>
<rect x="1702.2" y="625.8" width="6.4" height="6.4" rx="1" fill="#fff" stroke="#555" stroke-width="1.6"/>
<rect x="1444.1" y="708.0" width="6.4" height="6.4" rx="1" fill="#fff" stroke="#555" stroke-width="1.6"/>
<rect x="1378.3" y="783.3" width="6.4" height="6.4" rx="1" fill="#fff" stroke="#555" stroke-width="1.6"/>
<rect x="1498.2" y="858.1999999999999" width="6.4" height="6.4" rx="1" fill="#fff" stroke="#555" stroke-width="1.6"/>
<rect x="1451.2" y="1020.4" width="6.4" height="6.4" rx="1" fill="#fff" stroke="#555" stroke-width="1.6"/>
<rect x="1822.1" y="346.40000000000003" width="6.4" height="6.4" rx="1" fill="#fff" stroke="#555" stroke-width="1.6"/>
<circle cx="1543.8" cy="647" r="5.2" fill="#fff" stroke="#555" stroke-width="1.8"/>
</svg>
<div class="t " style="left:636.00px;top:-7.32px;font-size:24px;font-family:'Liberation Sans', sans-serif;font-weight:400;color:#7d5f92;letter-spacing:0.000px;paint-order:stroke fill;-webkit-text-stroke:3px rgba(255,255,255,0.8);font-style:italic;">Massachusetts</div>
<div class="t " style="left:670.00px;top:119.68px;font-size:24px;font-family:'Liberation Sans', sans-serif;font-weight:400;color:#7d5f92;letter-spacing:0.000px;paint-order:stroke fill;-webkit-text-stroke:3px rgba(255,255,255,0.8);font-style:italic;">Rhod</div>
<div class="t " style="left:706.00px;top:46.37px;font-size:22px;font-family:'Liberation Sans', sans-serif;font-weight:400;color:#3c3c3c;letter-spacing:0.000px;paint-order:stroke fill;-webkit-text-stroke:3px rgba(255,255,255,0.8);">Pro</div>
<div class="t " style="left:422.00px;top:147.16px;font-size:25.09px;font-family:'Liberation Sans', sans-serif;font-weight:400;color:#7d5f92;letter-spacing:0.090px;paint-order:stroke fill;-webkit-text-stroke:3px rgba(255,255,255,0.8);font-style:italic;">Connecticut</div>
<div class="t " style="left:370.60px;top:183.42px;font-size:23.72px;font-family:'Liberation Sans', sans-serif;font-weight:400;color:#3c3c3c;letter-spacing:-0.001px;paint-order:stroke fill;-webkit-text-stroke:3px rgba(255,255,255,0.8);">New Haven</div>
<div class="t " style="left:317.40px;top:256.26px;font-size:25.2px;font-family:'Liberation Sans', sans-serif;font-weight:400;color:#3c3c3c;letter-spacing:0.259px;paint-order:stroke fill;-webkit-text-stroke:3px rgba(255,255,255,0.8);">Bridgeport</div>
<div class="t " style="left:183.30px;top:291.54px;font-size:23.46px;font-family:'Liberation Sans', sans-serif;font-weight:400;color:#3c3c3c;letter-spacing:-0.003px;paint-order:stroke fill;-webkit-text-stroke:3px rgba(255,255,255,0.8);">Yonkers</div>
<div class="t " style="left:335.00px;top:332.39px;font-size:21.39px;font-family:'Liberation Sans', sans-serif;font-weight:700;color:#222;letter-spacing:0.038px;paint-order:stroke fill;-webkit-text-stroke:3px rgba(255,255,255,0.8);font-style:italic;">Long Island</div>
<div class="t " style="left:304.70px;top:370.05px;font-size:24.74px;font-family:'Liberation Sans', sans-serif;font-weight:400;color:#3c3c3c;letter-spacing:0.002px;paint-order:stroke fill;-webkit-text-stroke:3px rgba(255,255,255,0.8);">Brentwood</div>
<div class="t " style="left:140.30px;top:389.30px;font-size:28.93px;font-family:'Liberation Sans', sans-serif;font-weight:400;color:#333;letter-spacing:0.002px;paint-order:stroke fill;-webkit-text-stroke:3px rgba(255,255,255,0.8);">New York</div>
<div class="t " style="left:22.30px;top:451.36px;font-size:24.38px;font-family:'Liberation Sans', sans-serif;font-weight:400;color:#3c3c3c;letter-spacing:0.001px;paint-order:stroke fill;-webkit-text-stroke:3px rgba(255,255,255,0.8);">New Brunswick</div>
<div class="t " style="left:0.00px;top:490.83px;font-size:23.47px;font-family:'Liberation Sans', sans-serif;font-weight:400;color:#3c3c3c;letter-spacing:-0.002px;paint-order:stroke fill;-webkit-text-stroke:3px rgba(255,255,255,0.8);">Trenton</div>
<div class="t " style="left:54.00px;top:549.93px;font-size:22.88px;font-family:'Liberation Sans', sans-serif;font-weight:400;color:#7d5f92;letter-spacing:0.131px;paint-order:stroke fill;-webkit-text-stroke:3px rgba(255,255,255,0.8);font-style:italic;">New Jersey</div>
<div class="t " style="left:102.60px;top:601.89px;font-size:23.28px;font-family:'Liberation Sans', sans-serif;font-weight:400;color:#3c3c3c;letter-spacing:-0.003px;paint-order:stroke fill;-webkit-text-stroke:3px rgba(255,255,255,0.8);">Toms River</div>
<div class="t " style="left:1.00px;top:607.70px;font-size:23.97px;font-family:'Liberation Sans', sans-serif;font-weight:400;color:#444;letter-spacing:0.000px;paint-order:stroke fill;-webkit-text-stroke:3px rgba(255,255,255,0.8);">nia</div>
<div class="t " style="left:-1.00px;top:733.83px;font-size:23px;font-family:'Liberation Sans', sans-serif;font-weight:400;color:#3c3c3c;letter-spacing:0.000px;paint-order:stroke fill;-webkit-text-stroke:3px rgba(255,255,255,0.8);">nd</div>
<div class="t " style="left:71.40px;top:765.41px;font-size:24.79px;font-family:'Liberation Sans', sans-serif;font-weight:400;color:#3c3c3c;letter-spacing:0.002px;paint-order:stroke fill;-webkit-text-stroke:3px rgba(255,255,255,0.8);">Atlantic</div>
<div class="t " style="left:92.50px;top:795.98px;font-size:23.05px;font-family:'Liberation Sans', sans-serif;font-weight:400;color:#3c3c3c;letter-spacing:0.003px;paint-order:stroke fill;-webkit-text-stroke:3px rgba(255,255,255,0.8);">City</div>
<div class="t " style="left:-6.00px;top:985.22px;font-size:21px;font-family:'Liberation Sans', sans-serif;font-weight:400;color:#3c3c3c;letter-spacing:0.000px;paint-order:stroke fill;-webkit-text-stroke:3px rgba(255,255,255,0.8);">n</div>
</div>
<div class="a" style="left:418px;top:6px;width:173px;height:52px;background:#dcf7dc;border:2px solid #a8d9a8;border-radius:6px"></div>
<div class="a" style="left:1835px;top:2px;width:161px;height:60px;background:#f4f4f5;border:2px solid #d9d9dd"></div>
<div class="a" style="left:674px;top:351.5px;width:200px;height:3.5px;background:#141414"></div>
<div class="a" style="left:874px;top:353px;width:194px;height:2px;background:#dfdfe4"></div>
<div class="a" style="left:1146px;top:285px;width:146px;height:59.60000000000002px;background:#f4f4f5;border:2px solid #d9d9dd"></div>
<div class="a" style="left:1391px;top:285px;width:84.5px;height:59.30000000000001px;background:#ededf0;border:2px solid #d9d9dd;border-left:none"></div>
<div class="a" style="left:1308.4px;top:285px;width:83.59999999999991px;height:59.30000000000001px;background:#f4f4f5;border:2px solid #7d7d86"></div>
<div class="a" style="left:1492.3px;top:285.5px;width:233.20000000000005px;height:58.5px;background:#fff;border:2px solid #dcdce0"></div>
<div class="a" style="left:1498px;top:291.4px;width:8px;height:47.10000000000002px;background:#8a92a0"></div>
<div class="a" style="left:1738.3px;top:285.5px;width:233.29999999999995px;height:58.5px;background:#fff;border:2px solid #dcdce0"></div>
<div class="a" style="left:1744px;top:291.4px;width:8px;height:47.10000000000002px;background:#8a92a0"></div>
<div class="a" style="left:1986.4px;top:281.3px;width:64.29999999999973px;height:65.19999999999999px;background:rgba(120,130,110,0.28);border-radius:11px"></div>
<div class="a" style="left:1990.2px;top:284.8px;width:57.799999999999955px;height:58.19999999999999px;background:#fff;border-radius:8px"></div>
<div class="a" style="left:674px;top:423px;width:636px;height:60px;background:#fff;border:2px solid #dcdce0"></div>
<div class="a" style="left:674px;top:655px;width:636px;height:60px;background:#fff;border:2px solid #dcdce0"></div>
<div class="a" style="left:674px;top:887px;width:636px;height:60px;background:#fff;border:2px solid #dcdce0"></div>
<div class="a" style="left:674px;top:1003px;width:636px;height:60px;background:#fff;border:2px solid #dcdce0"></div>
<div class="a" style="left:674px;top:1119px;width:636px;height:60px;background:#fff;border:2px solid #dcdce0"></div>
<div class="a" style="left:674px;top:1235px;width:636px;height:60px;background:#fff;border:2px solid #dcdce0"></div>
<div class="a" style="left:674px;top:1351px;width:636px;height:60px;background:#fff;border:2px solid #dcdce0"></div>
<div class="a" style="left:674px;top:1467px;width:636px;height:60px;background:#fff;border:2px solid #dcdce0"></div>
<div class="a" style="left:680px;top:893px;width:8px;height:48px;background:#8a92a0"></div>
<div class="a" style="left:680px;top:1009px;width:8px;height:48px;background:#8a92a0"></div>
<div class="a" style="left:680px;top:1125px;width:8px;height:48px;background:#8a92a0"></div>
<div class="a" style="left:680px;top:1241px;width:8px;height:48px;background:#8a92a0"></div>
<div class="a" style="left:680px;top:1357px;width:8px;height:48px;background:#8a92a0"></div>
<div class="a" style="left:674px;top:539px;width:636px;height:60px;background:#f4f4f5;border:2px solid #7d7d86"></div>
<div class="a" style="left:992px;top:771px;width:318px;height:60px;background:#ededf0;border:2px solid #d9d9dd;border-left:none"></div>
<div class="a" style="left:674px;top:771px;width:318px;height:60px;background:#f4f4f5;border:2px solid #7d7d86"></div>
<div class="a" style="left:1968.4px;top:1498px;width:83.59999999999991px;height:59.700000000000045px;background:#ededf0"></div>
<div class="a" style="left:1638.2px;top:1570px;width:409.39999999999986px;height:48px;background:#fff;border-radius:24px"></div>
<div class="a" style="left:2000.8px;top:1570.6px;width:46.799999999999955px;height:46.80000000000018px;background:#ededf0;border-radius:50%"></div>
<div class="a" style="left:2009.8px;top:1580px;width:28.799999999999955px;height:28.799999999999955px;background:#000;border-radius:50%"></div>
<div class="t " style="left:33.60px;top:17.97px;font-size:28.5px;font-family:'Liberation Sans', sans-serif;font-weight:400;color:#3d3f46;letter-spacing:-0.249px;">My Desk</div>
<div class="t " style="left:192.00px;top:18.39px;font-size:28px;font-family:'Liberation Sans', sans-serif;font-weight:700;color:#1c1c1e;letter-spacing:-0.363px;">cool-machine</div>
<div class="t " style="left:485.30px;top:20.03px;font-size:25px;font-family:'Liberation Sans', sans-serif;font-weight:400;color:#2d6c2d;letter-spacing:-1.050px;">Live</div>
<div class="t " style="left:1862.40px;top:19.81px;font-size:25.5px;font-family:'Liberation Sans', sans-serif;font-weight:400;color:#111;letter-spacing:-1.938px;">Save</div>
<div class="t " style="left:1957.20px;top:19.81px;font-size:25.5px;font-family:'Liberation Sans', sans-serif;font-weight:400;color:#8a8a93;letter-spacing:0.000px;transform:scaleX(0.84);transform-origin:0 0;">S</div>
<div class="t " style="left:32.40px;top:103.80px;font-size:29.5px;font-family:'Liberation Mono', monospace;font-weight:700;color:#1f1f22;letter-spacing:-0.341px;">CONFIGURE</div>
<div class="t " style="left:255.00px;top:103.80px;font-size:29.5px;font-family:'Liberation Mono', monospace;font-weight:400;color:#3a3a40;letter-spacing:-0.655px;">CONTROL</div>
<div class="t " style="left:443.00px;top:103.80px;font-size:29.5px;font-family:'Liberation Mono', monospace;font-weight:400;color:#3a3a40;letter-spacing:-0.933px;">LOGS</div>
<div class="t " style="left:577.00px;top:103.80px;font-size:29.5px;font-family:'Liberation Mono', monospace;font-weight:400;color:#3a3a40;letter-spacing:-0.488px;">CONNECT</div>
<div class="t " style="left:78.90px;top:184.76px;font-size:24.5px;font-family:'Liberation Sans', sans-serif;font-weight:700;color:#1c1c1e;letter-spacing:-0.767px;">Builder</div>
<div class="t " style="left:253.10px;top:184.76px;font-size:24.5px;font-family:'Liberation Sans', sans-serif;font-weight:400;color:#6e6e77;letter-spacing:-2.214px;">JSON</div>
<div class="t " style="left:413.60px;top:184.76px;font-size:24.5px;font-family:'Liberation Sans', sans-serif;font-weight:400;color:#6e6e77;letter-spacing:-0.520px;">Frame</div>
<div class="t " style="left:60.90px;top:276.79px;font-size:28px;font-family:'Liberation Sans', sans-serif;font-weight:700;color:#1c1c1e;letter-spacing:-0.235px;">cool-machine-main</div>
<div class="t " style="left:105.20px;top:332.07px;font-size:28.5px;font-family:'Liberation Sans', sans-serif;font-weight:400;color:#1c1c1e;letter-spacing:0.556px;">motor-l</div>
<div class="t " style="left:105.20px;top:388.07px;font-size:28.5px;font-family:'Liberation Sans', sans-serif;font-weight:400;color:#1c1c1e;letter-spacing:0.294px;">local</div>
<div class="t " style="left:105.20px;top:444.07px;font-size:28.5px;font-family:'Liberation Sans', sans-serif;font-weight:400;color:#1c1c1e;letter-spacing:0.495px;">motor-r</div>
<div class="t " style="left:105.20px;top:500.07px;font-size:28.5px;font-family:'Liberation Sans', sans-serif;font-weight:400;color:#1c1c1e;letter-spacing:-0.081px;">rover</div>
<div class="t " style="left:105.20px;top:556.07px;font-size:28.5px;font-family:'Liberation Sans', sans-serif;font-weight:400;color:#1c1c1e;letter-spacing:0.040px;">movement_sensor</div>
<div class="t " style="left:105.20px;top:612.07px;font-size:28.5px;font-family:'Liberation Sans', sans-serif;font-weight:400;color:#1c1c1e;letter-spacing:0.367px;">your-navigation-service</div>
<div class="t " style="left:758.90px;top:211.22px;font-size:27.5px;font-family:'Liberation Sans', sans-serif;font-weight:700;color:#1c1c1e;letter-spacing:-0.079px;">your-navigation-service</div>
<div class="a" style="left:1085.5px;top:205.3px;width:156.70000000000005px;height:39.0px;background:#f5f5f6;border:2px solid #cdcdd2;border-radius:20px"></div>
<div class="t " style="left:1107.60px;top:212.53px;font-size:25px;font-family:'Liberation Sans', sans-serif;font-weight:400;color:#222;letter-spacing:-0.153px;">navigation</div>
<div class="t " style="left:706.60px;top:310.65px;font-size:29px;font-family:'Liberation Sans', sans-serif;font-weight:700;color:#1c1c1e;letter-spacing:-0.193px;">Attributes</div>
<div class="t " style="left:906.80px;top:310.65px;font-size:29px;font-family:'Liberation Sans', sans-serif;font-weight:400;color:#3b4556;letter-spacing:-0.092px;">Obstacles</div>
<div class="t " style="left:1173.00px;top:302.83px;font-size:25px;font-family:'Liberation Sans', sans-serif;font-weight:400;color:#1c1c1e;letter-spacing:0.381px;">Satellite</div>
<div class="t " style="left:1335.30px;top:303.66px;font-size:24.5px;font-family:'Liberation Sans', sans-serif;font-weight:700;color:#1c1c1e;letter-spacing:-1.511px;">2D</div>
<div class="t " style="left:1418.70px;top:303.66px;font-size:24.5px;font-family:'Liberation Sans', sans-serif;font-weight:400;color:#3a3a40;letter-spacing:-0.811px;">3D</div>
<div class="a" style="left:1507px;top:290px;width:201.2px;height:50px;overflow:hidden"><div class="t " style="left:11.50px;top:11.89px;font-size:26px;font-family:'Liberation Sans', sans-serif;font-weight:400;color:#111;letter-spacing:0.000px;">39.628481759234</div></div>
<div class="a" style="left:1753px;top:290px;width:203.5px;height:50px;overflow:hidden"><div class="t " style="left:11.80px;top:11.89px;font-size:26px;font-family:'Liberation Sans', sans-serif;font-weight:400;color:#111;letter-spacing:0.000px;">-73.248639724766</div></div>
<div class="t " style="left:675.00px;top:387.70px;font-size:23.5px;font-family:'Liberation Sans', sans-serif;font-weight:400;color:#3b3e45;letter-spacing:-0.052px;">Base</div>
<div class="t " style="left:675.00px;top:504.10px;font-size:23.5px;font-family:'Liberation Sans', sans-serif;font-weight:400;color:#3b3e45;letter-spacing:0.864px;">Map type</div>
<div class="t " style="left:675.00px;top:620.10px;font-size:23.5px;font-family:'Liberation Sans', sans-serif;font-weight:400;color:#3b3e45;letter-spacing:0.616px;">Movement sensor</div>
<div class="t " style="left:675.00px;top:735.50px;font-size:23.5px;font-family:'Liberation Sans', sans-serif;font-weight:400;color:#3b3e45;letter-spacing:0.730px;">Motion service</div>
<div class="t " style="left:675.00px;top:851.80px;font-size:23.5px;font-family:'Liberation Sans', sans-serif;font-weight:400;color:#3b3e45;letter-spacing:0.354px;">Plan deviation (m)</div>
<div class="t " style="left:675.00px;top:967.80px;font-size:23.5px;font-family:'Liberation Sans', sans-serif;font-weight:400;color:#3b3e45;letter-spacing:0.663px;">Position polling frequency (hz)</div>
<div class="t " style="left:675.00px;top:1083.80px;font-size:23.5px;font-family:'Liberation Sans', sans-serif;font-weight:400;color:#3b3e45;letter-spacing:0.692px;">Obstacle polling frequency (hz)</div>
<div class="t " style="left:675.00px;top:1199.80px;font-size:23.5px;font-family:'Liberation Sans', sans-serif;font-weight:400;color:#3b3e45;letter-spacing:0.597px;">Linear velocity (m/s)</div>
<div class="t " style="left:675.00px;top:1315.80px;font-size:23.5px;font-family:'Liberation Sans', sans-serif;font-weight:400;color:#3b3e45;letter-spacing:0.772px;">Angular velocity (deg/s)</div>
<div class="t " style="left:675.00px;top:1431.80px;font-size:23.5px;font-family:'Liberation Sans', sans-serif;font-weight:400;color:#3b3e45;letter-spacing:0.809px;">Store</div>
<div class="t " style="left:692.00px;top:441.68px;font-size:24px;font-family:'Liberation Sans', sans-serif;font-weight:400;color:#1c1c1e;letter-spacing:0.507px;">rover</div>
<div class="t " style="left:967.60px;top:558.68px;font-size:24px;font-family:'Liberation Sans', sans-serif;font-weight:700;color:#1c1c1e;letter-spacing:-1.294px;">GPS</div>
<div class="t " style="left:692.70px;top:673.18px;font-size:24px;font-family:'Liberation Sans', sans-serif;font-weight:400;color:#1c1c1e;letter-spacing:0.313px;">movement_sensor</div>
<div class="t " style="left:797.50px;top:789.68px;font-size:24px;font-family:'Liberation Sans', sans-serif;font-weight:700;color:#1c1c1e;letter-spacing:-0.457px;">Builtin</div>
<div class="t " style="left:1108.70px;top:789.68px;font-size:24px;font-family:'Liberation Sans', sans-serif;font-weight:400;color:#2a2a30;letter-spacing:0.324px;">Custom</div>
<div class="t " style="left:700.40px;top:905.08px;font-size:24px;font-family:'Liberation Sans', sans-serif;font-weight:400;color:#8a92a2;letter-spacing:0.000px;">1</div>
<div class="t " style="left:700.40px;top:1021.08px;font-size:24px;font-family:'Liberation Sans', sans-serif;font-weight:400;color:#8a92a2;letter-spacing:0.000px;">2</div>
<div class="t " style="left:700.40px;top:1137.08px;font-size:24px;font-family:'Liberation Sans', sans-serif;font-weight:400;color:#8a92a2;letter-spacing:0.000px;">0</div>
<div class="t " style="left:700.40px;top:1253.08px;font-size:24px;font-family:'Liberation Sans', sans-serif;font-weight:400;color:#8a92a2;letter-spacing:0.000px;">0</div>
<div class="t " style="left:700.40px;top:1369.08px;font-size:24px;font-family:'Liberation Sans', sans-serif;font-weight:400;color:#8a92a2;letter-spacing:0.000px;">0</div>
<div class="t " style="left:692.50px;top:1485.68px;font-size:24px;font-family:'Liberation Sans', sans-serif;font-weight:400;color:#8a92a2;letter-spacing:0.627px;">memory</div>
<div class="t " style="left:674.50px;top:1580.72px;font-size:27.5px;font-family:'Liberation Sans', sans-serif;font-weight:400;color:#1c1c1e;letter-spacing:0.902px;">Obstacle detectors</div>
<div class="t " style="left:1654.40px;top:1582.19px;font-size:26px;font-family:'Liberation Sans', sans-serif;font-weight:400;color:#111;letter-spacing:-0.821px;">© OpenStreetMap Contributors</div>
<svg width="2094" height="1664" viewBox="0 0 2094 1664"><circle cx="451.8" cy="31.4" r="2.5" fill="#2e6c2e"/><path d="M447.36,36.69 A6.9,6.9 0 1 1 456.24,36.69" fill="none" stroke="#2e6c2e" stroke-width="2.7"/><path d="M444.97,41.15 A11.9,11.9 0 1 1 458.63,41.15" fill="none" stroke="#2e6c2e" stroke-width="2.7"/><circle cx="32.1" cy="289.2" r="2.5" fill="#2e6c2e"/><path d="M27.66,294.49 A6.9,6.9 0 1 1 36.54,294.49" fill="none" stroke="#2e6c2e" stroke-width="2.7"/><path d="M25.27,298.95 A11.9,11.9 0 1 1 38.93,298.95" fill="none" stroke="#2e6c2e" stroke-width="2.7"/><polyline points="164.6,26.6 171.4,32.5 164.6,38.4" fill="none" stroke="#74747c" stroke-width="2.3"/><polyline points="554.6,28.6 561,35 567.4,28.6" fill="none" stroke="#2e6c2e" stroke-width="2.7"/><circle cx="2034.2" cy="32" r="2.9" fill="#8a8a93"/><circle cx="2042.1" cy="32" r="2.9" fill="#8a8a93"/><circle cx="2050.1" cy="32" r="2.9" fill="#8a8a93"/><circle cx="2022.1" cy="225" r="2.9" fill="#80808b"/><circle cx="2030.2" cy="225" r="2.9" fill="#80808b"/><circle cx="2038.4" cy="225" r="2.9" fill="#80808b"/><g fill="none" stroke="#8a8a93" stroke-width="2.0"><path d="M1939.5,27.6 L1948.3000000000002,27.6 L1948.3000000000002,36.4 L1939.5,36.4 Z"/><path d="M1939.5,27.6 L1939.5,25.2 A2.4,2.4 0 1 0 1937.1000000000001,27.6 Z"/><path d="M1948.3000000000002,27.6 L1948.3000000000002,25.2 A2.4,2.4 0 1 1 1950.7,27.6 Z"/><path d="M1939.5,36.4 L1939.5,38.8 A2.4,2.4 0 1 1 1937.1000000000001,36.4 Z"/><path d="M1948.3000000000002,36.4 L1948.3000000000002,38.8 A2.4,2.4 0 1 0 1950.7,36.4 Z"/></g><g stroke-linecap="round"><line x1="50.4" y1="191.6" x2="57.6" y2="184.9" stroke="#63666c" stroke-width="4.6" stroke-linecap="butt"/><line x1="42.4" y1="199.8" x2="34.7" y2="207.6" stroke="#63666c" stroke-width="4.6"/><line x1="39.5" y1="192.5" x2="57.2" y2="206.9" stroke="#f9f9fa" stroke-width="8.2"/><line x1="39.5" y1="192.5" x2="57.2" y2="206.9" stroke="#63666c" stroke-width="4.8"/><circle cx="37.9" cy="188.8" r="5.7" fill="#63666c"/><line x1="38.3" y1="189.2" x2="31.5" y2="182.4" stroke="#f9f9fa" stroke-width="3.6"/></g><path d="M218.56,185.60 C214.53,185.60 214.53,187.40 214.53,189.40 L214.53,193.00 C214.53,195.00 211.69,196.00 210.50,196.00 C211.69,196.00 214.53,197.00 214.53,199.00 L214.53,202.60 C214.53,204.60 214.53,206.40 218.56,206.40 M223.74,185.60 C227.77,185.60 227.77,187.40 227.77,189.40 L227.77,193.00 C227.77,195.00 230.62,196.00 231.80,196.00 C230.62,196.00 227.77,197.00 227.77,199.00 L227.77,202.60 C227.77,204.60 227.77,206.40 223.74,206.40" fill="none" stroke="#85858e" stroke-width="2.3" stroke-linejoin="round"/><g fill="#80808b" stroke="#80808b" stroke-width="2.2" stroke-linejoin="round"><path d="M379.9,183.6 L375.3,188 L384.5,188 Z"/><path d="M379.9,188 L379.9,200.2 M379.9,200.2 L369.5,205.6 M379.9,200.2 L390.3,205.6" fill="none"/><path d="M366.6,208 L367.5,201.5 L372,207.6 Z"/><path d="M393.4,208 L392.5,201.5 L388,207.6 Z"/></g><path d="M498,281 L498,299 M489,290 L507,290" stroke="#7c7c86" stroke-width="2.2"/><path d="M76,333.2 L88.8,346 L76,358.8 L63.2,346 Z" fill="none" stroke="#8a8a93" stroke-width="2.6"/><path d="M76,389.2 L88.8,402 L76,414.8 L63.2,402 Z" fill="none" stroke="#8a8a93" stroke-width="2.6"/><path d="M76,445.2 L88.8,458 L76,470.8 L63.2,458 Z" fill="none" stroke="#8a8a93" stroke-width="2.6"/><path d="M76,501.2 L88.8,514 L76,526.8 L63.2,514 Z" fill="none" stroke="#8a8a93" stroke-width="2.6"/><path d="M76,557.2 L88.8,570 L76,582.8 L63.2,570 Z" fill="none" stroke="#8a8a93" stroke-width="2.6"/><g transform="translate(-650.5,400.8)" fill="#80808b" stroke="#80808b" stroke-width="0.6" stroke-linejoin="round"><path d="M721.9,211.0 L723.4,218.3 L730.9,219.8 L723.4,221.3 L721.9,228.60000000000002 L720.4,221.3 L712.9,219.8 L720.4,218.3 Z"/><path d="M727.6503,225.4503 L732.6,228.9 L737.5497,225.4503 L734.1,230.4 L737.5497,235.3497 L732.6,231.9 L727.6503,235.3497 L731.1,230.4 Z"/><path d="M715.82308,230.52308 L719.5,233.0 L723.17692,230.52308 L720.7,234.2 L723.17692,237.87691999999998 L719.5,235.39999999999998 L715.82308,237.87691999999998 L718.3,234.2 Z"/></g><g transform="translate(0,0)" fill="#80808b" stroke="#80808b" stroke-width="0.6" stroke-linejoin="round"><path d="M721.9,211.0 L723.4,218.3 L730.9,219.8 L723.4,221.3 L721.9,228.60000000000002 L720.4,221.3 L712.9,219.8 L720.4,218.3 Z"/><path d="M727.6503,225.4503 L732.6,228.9 L737.5497,225.4503 L734.1,230.4 L737.5497,235.3497 L732.6,231.9 L727.6503,235.3497 L731.1,230.4 Z"/><path d="M715.82308,230.52308 L719.5,233.0 L723.17692,230.52308 L720.7,234.2 L723.17692,237.87691999999998 L719.5,235.39999999999998 L715.82308,237.87691999999998 L718.3,234.2 Z"/></g><polyline points="672.6,221.6 680,229.3 687.2,221.6" fill="none" stroke="#80808b" stroke-width="2.5"/><path d="M1967.40,213.40 C1963.25,213.40 1963.25,215.20 1963.25,217.20 L1963.25,221.50 C1963.25,223.50 1960.32,224.50 1959.10,224.50 C1960.32,224.50 1963.25,225.50 1963.25,227.50 L1963.25,231.80 C1963.25,233.80 1963.25,235.60 1967.40,235.60 M1972.80,213.40 C1976.95,213.40 1976.95,215.20 1976.95,217.20 L1976.95,221.50 C1976.95,223.50 1979.88,224.50 1981.10,224.50 C1979.88,224.50 1976.95,225.50 1976.95,227.50 L1976.95,231.80 C1976.95,233.80 1976.95,235.60 1972.80,235.60" fill="none" stroke="#80808b" stroke-width="2.4" stroke-linejoin="round"/><circle cx="1110.1" cy="314.6" r="15.4" fill="none" stroke="#151515" stroke-width="2.8"/><path d="M1104.6,311.2 C1105.2,307.8 1107.5,306.3 1110.1,306.3 C1113,306.3 1115.4,308.3 1115.4,311.3 C1115.4,314.6 1110.4,316 1110.4,319.8" fill="none" stroke="#151515" stroke-width="3"/><rect x="1108.2" y="321.6" width="3.9" height="3.4" fill="#151515"/><path d="M2019,297 L2010.7,313.1 L2027.3,313.1 Z" fill="#222"/><path d="M2010.7,316.6 L2027.3,316.6 L2019,332.3 Z" fill="#bcbcbc"/><path d="M2021,1516.8 L1999,1526.8 L2009.2,1528.6 L2011.2,1539 Z" fill="none" stroke="#8a8a93" stroke-width="2.2" stroke-linejoin="round"/><circle cx="2024.2" cy="1587.3" r="2.2" fill="#fff"/><rect x="2022.1" y="1591.2" width="4.2" height="11" rx="0.8" fill="#fff"/></svg>
</body></html>
